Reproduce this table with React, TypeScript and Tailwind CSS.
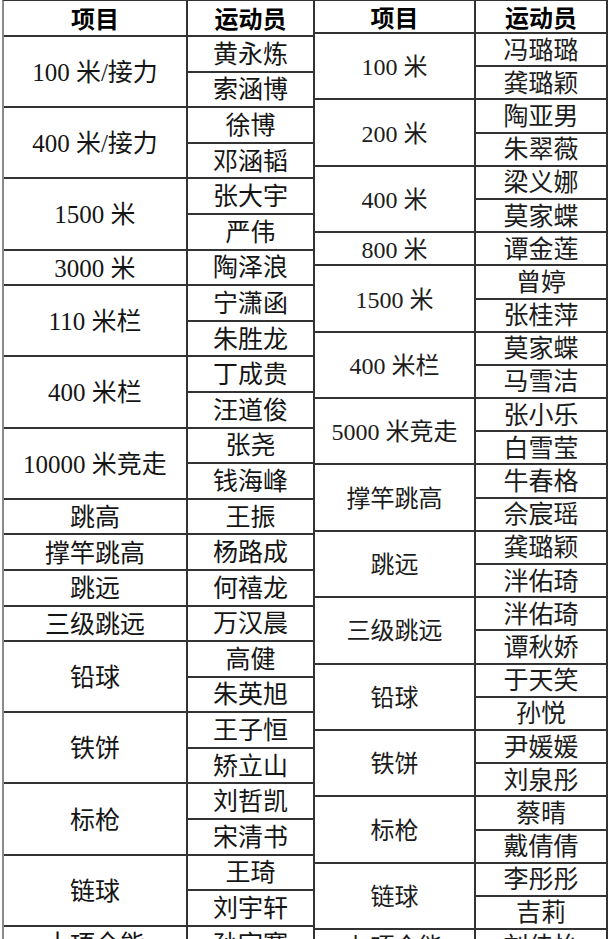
type Group = { event: string; names: string[] };

const menEvents: Group[] = [
  { event: "100 米/接力", names: ["黄永炼", "索涵博"] },
  { event: "400 米/接力", names: ["徐博", "邓涵韬"] },
  { event: "1500 米", names: ["张大宇", "严伟"] },
  { event: "3000 米", names: ["陶泽浪"] },
  { event: "110 米栏", names: ["宁潇函", "朱胜龙"] },
  { event: "400 米栏", names: ["丁成贵", "汪道俊"] },
  { event: "10000 米竞走", names: ["张尧", "钱海峰"] },
  { event: "跳高", names: ["王振"] },
  { event: "撑竿跳高", names: ["杨路成"] },
  { event: "跳远", names: ["何禧龙"] },
  { event: "三级跳远", names: ["万汉晨"] },
  { event: "铅球", names: ["高健", "朱英旭"] },
  { event: "铁饼", names: ["王子恒", "矫立山"] },
  { event: "标枪", names: ["刘哲凯", "宋清书"] },
  { event: "链球", names: ["王琦", "刘宇轩"] },
  { event: "十项全能", names: ["孙宇赛"] },
];

const womenEvents: Group[] = [
  { event: "100 米", names: ["冯璐璐", "龚璐颖"] },
  { event: "200 米", names: ["陶亚男", "朱翠薇"] },
  { event: "400 米", names: ["梁义娜", "莫家蝶"] },
  { event: "800 米", names: ["谭金莲"] },
  { event: "1500 米", names: ["曾婷", "张桂萍"] },
  { event: "400 米栏", names: ["莫家蝶", "马雪洁"] },
  { event: "5000 米竞走", names: ["张小乐", "白雪莹"] },
  { event: "撑竿跳高", names: ["牛春格", "佘宸瑶"] },
  { event: "跳远", names: ["龚璐颖", "泮佑琦"] },
  { event: "三级跳远", names: ["泮佑琦", "谭秋娇"] },
  { event: "铅球", names: ["于天笑", "孙悦"] },
  { event: "铁饼", names: ["尹媛媛", "刘泉彤"] },
  { event: "标枪", names: ["蔡晴", "戴倩倩"] },
  { event: "链球", names: ["李彤彤", "吉莉"] },
  { event: "七项全能", names: ["刘佳怡"] },
];

const serif = "font-['Liberation_Serif','Noto_Sans_CJK_SC',serif]";

function LeftTable() {
  return (
    <div className="w-[313px] shrink-0 border-l-2 border-t border-l-[#8a8a8a] border-t-[#333]">
      <div className="flex h-[36px] font-['Noto_Sans_CJK_SC',sans-serif] text-[24px] font-bold leading-none">
        <div className="flex w-[184px] items-center justify-center border-r-2 border-b-2 border-[#333]">项目</div>
        <div className="flex w-[127px] items-center justify-center border-r-2 border-b-2 border-[#333]">运动员</div>
      </div>
      {menEvents.map((g, i) => (
        <div key={i} className={`flex ${serif} text-[25px] leading-none text-[#151515]`}>
          <div className="flex w-[184px] items-center justify-center border-r-2 border-b-2 border-[#333] pt-[2px]">
            {g.event}
          </div>
          <div className="flex w-[127px] flex-col">
            {g.names.map((n, j) => (
              <div
                key={j}
                className="flex h-[35.6px] items-center justify-center border-r-2 border-b-2 border-[#333] pt-[1px]"
              >
                {n}
              </div>
            ))}
          </div>
        </div>
      ))}
    </div>
  );
}

function RightTable() {
  return (
    <div className="w-[293px] shrink-0 border-t border-t-[#333]">
      <div className="flex h-[33px] font-['Noto_Sans_CJK_SC',sans-serif] text-[24px] font-bold leading-none">
        <div className="flex w-[161px] items-center justify-center border-r-2 border-b-2 border-[#333]">项目</div>
        <div className="flex w-[132px] items-center justify-center border-r-2 border-b-2 border-[#333]">运动员</div>
      </div>
      {womenEvents.map((g, i) => (
        <div key={i} className={`flex ${serif} text-[24px] leading-none text-[#1c1c1c]`}>
          <div className="flex w-[161px] items-center justify-center border-r-2 border-b-2 border-[#333] pt-[2px]">
            {g.event}
          </div>
          <div className="flex w-[132px] flex-col">
            {g.names.map((n, j) => (
              <div
                key={j}
                className="flex h-[33.2px] items-center justify-center border-r-2 border-b-2 border-[#333] text-[25px] pt-[1px]"
              >
                {n}
              </div>
            ))}
          </div>
        </div>
      ))}
    </div>
  );
}

export default function App() {
  return (
    <div className="h-[939px] w-[609px] overflow-hidden bg-white text-black">
      <div className="flex items-start pl-[2px]">
        <LeftTable />
        <RightTable />
      </div>
    </div>
  );
}
